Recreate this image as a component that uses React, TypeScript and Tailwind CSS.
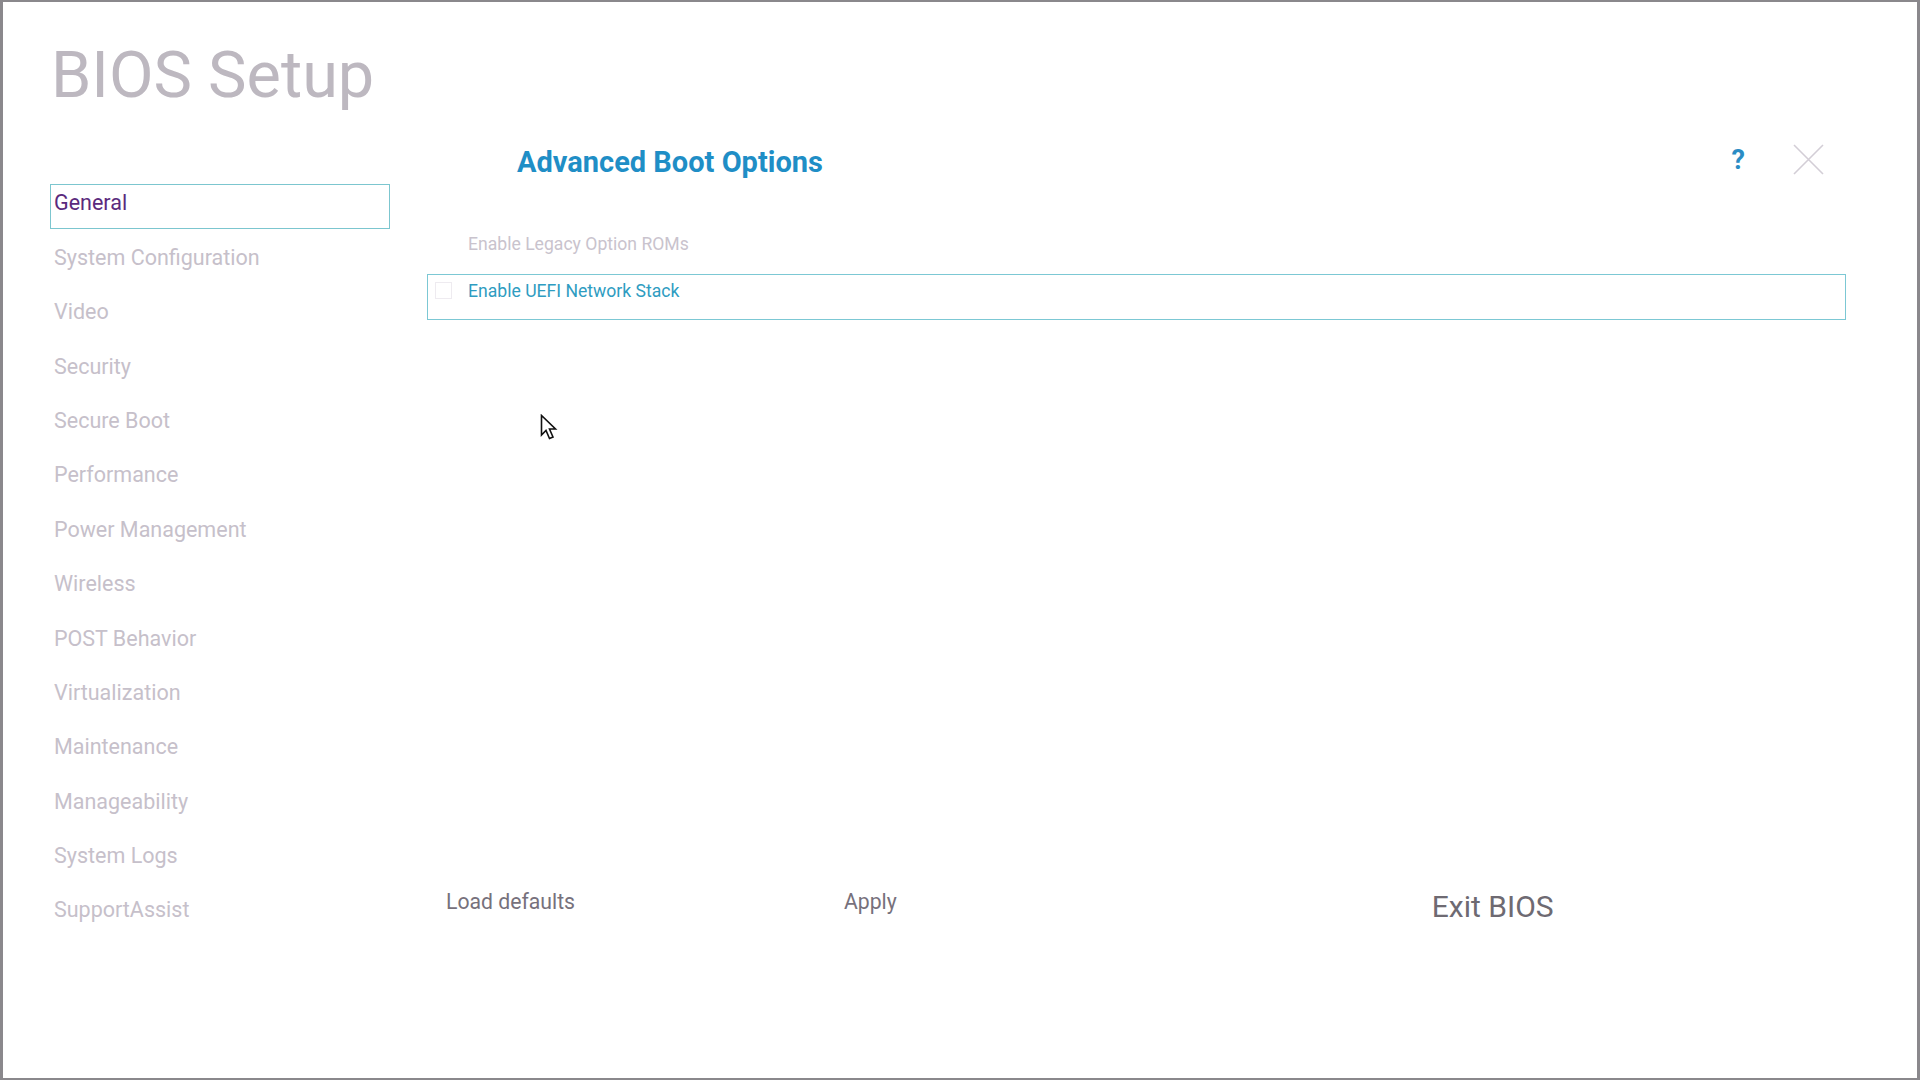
import React from "react";

const navItems = [
  "General",
  "System Configuration",
  "Video",
  "Security",
  "Secure Boot",
  "Performance",
  "Power Management",
  "Wireless",
  "POST Behavior",
  "Virtualization",
  "Maintenance",
  "Manageability",
  "System Logs",
  "SupportAssist",
];

function Cursor() {
  return (
    <svg
      className="absolute left-[537px] top-[412px]"
      width="20"
      height="30"
      viewBox="0 0 20 30"
    >
      <path
        d="M1.5 1.5 L1.5 21 L6 16.5 L9.5 24.5 L13 23 L9.5 15 L15.5 15 Z"
        fill="#ffffff"
        stroke="#111111"
        strokeWidth="1.6"
        strokeLinejoin="miter"
      />
    </svg>
  );
}

export default function App() {
  return (
    <div className="relative w-[1920px] h-[1080px] bg-white border-l-[3px] border-r-[3px] border-t-2 border-b-2 border-[#8a888c] font-['Roboto','Liberation_Sans',sans-serif] overflow-hidden">
      <div className="h-[118px] pl-[48px] pt-[40px]">
        <h1 className="text-[64.8px] leading-[66px] text-[#bdb8c0] font-normal">BIOS Setup</h1>
      </div>

      <div className="flex">
        {/* sidebar */}
        <nav className="ml-[47px] w-[340px] pt-[64px] flex flex-col gap-[9.4px]">
          {navItems.map((item, i) => (
            <div
              key={item}
              className={
                i === 0
                  ? "h-[45px] flex items-center pl-[3px] pb-[6px] border border-[#7cc6cf] text-[21.5px] text-[#5b2a7d]"
                  : "h-[45px] flex items-center pl-[3px] pb-[6px] border border-transparent text-[21.5px] text-[#c6c0ca]"
              }
            >
              {item}
            </div>
          ))}
        </nav>

        {/* main panel */}
        <main className="ml-[37px] w-[1419px] flex flex-col">
          <div className="mt-[25px] flex items-start">
            <h2 className="pl-[90px] text-[29px] leading-[34px] font-bold text-[#1f8ec6]">
              Advanced Boot Options
            </h2>
            <div className="ml-auto flex items-start pr-[22px]">
              <span className="mt-[-1px] text-[27px] leading-[32px] font-bold text-[#2a8cc4]">?</span>
              <svg className="ml-[48px] mt-[-1px]" width="31" height="31" viewBox="0 0 31 31">
                <path d="M1 1 L30 30 M30 1 L1 30" stroke="#d3ced6" strokeWidth="1.6" />
              </svg>
            </div>
          </div>

          <div className="mt-[55px] pl-[41px] text-[17.6px] leading-[20px] text-[#c9c3cd]">
            Enable Legacy Option ROMs
          </div>

          <div className="mt-[20px] h-[46px] border border-[#7cc8d4] flex items-start pt-[6px] pl-[7px]">
            <span className="mt-[1px] w-[17px] h-[17px] border border-[#eeebf0]" />
            <span className="ml-[16px] text-[17.6px] leading-[20px] text-[#2e9cc1]">
              Enable UEFI Network Stack
            </span>
          </div>

          <div className="mt-[570px] flex items-start">
            <button className="ml-[19px] w-[398px] text-left text-[21.2px] leading-[24px] text-[#77717c]">
              Load defaults
            </button>
            <button className="text-left text-[21.2px] leading-[24px] text-[#77717c]">Apply</button>
            <button className="ml-[535px] mt-[1px] text-[30px] leading-[32px] text-[#6e6a72]">Exit BIOS</button>
          </div>
        </main>
      </div>

      <Cursor />
    </div>
  );
}
